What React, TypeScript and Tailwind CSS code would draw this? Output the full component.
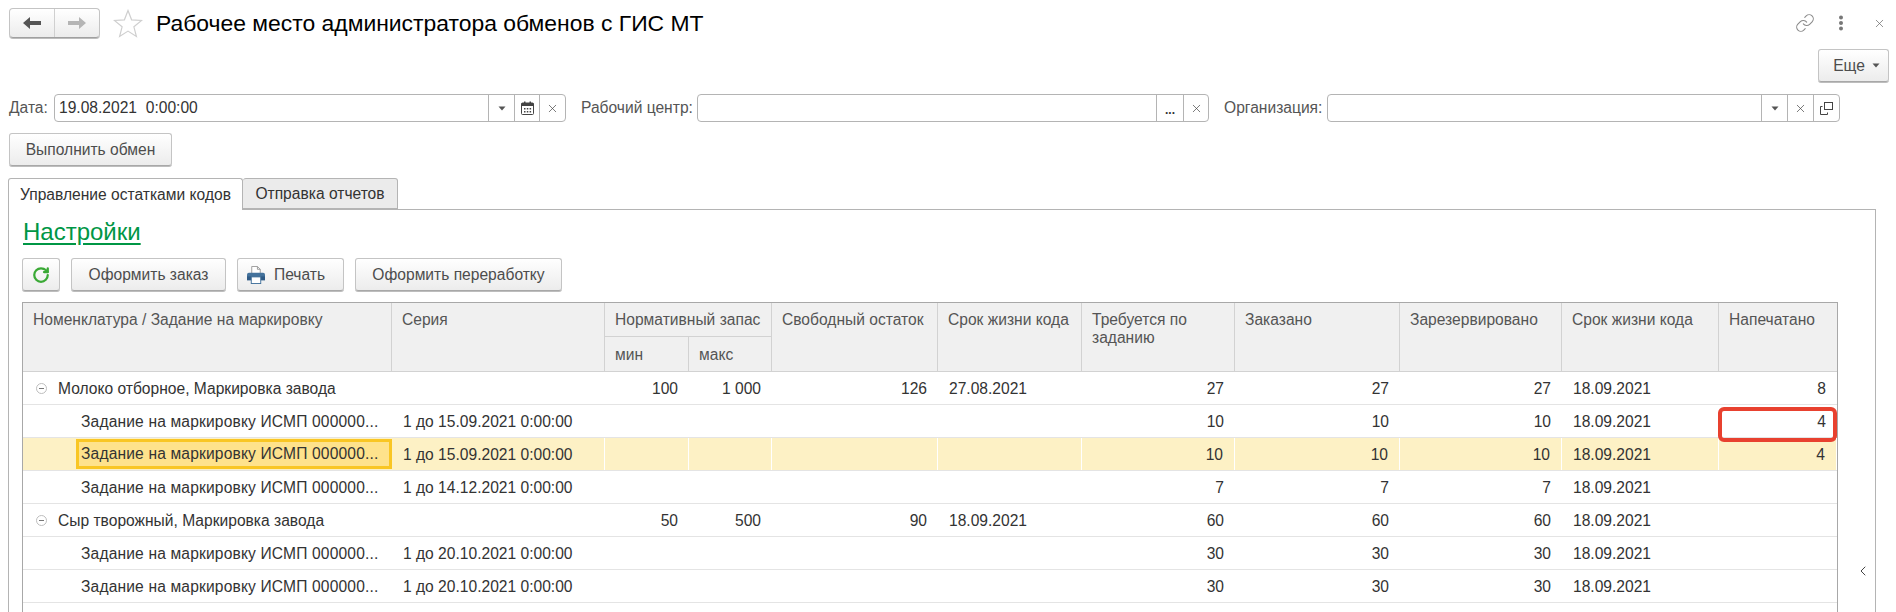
import { Link, RotateCw, X, ChevronLeft } from "lucide-react";

type Row = {
  name: string;
  group?: boolean;
  selected?: boolean;
  series?: string;
  min?: string;
  max?: string;
  free?: string;
  life?: string;
  need: string;
  ordered: string;
  reserved: string;
  life2: string;
  printed?: string;
  marked?: boolean;
};

const TASK = "Задание на маркировку ИСМП 000000...";

const rows: Row[] = [
  { name: "Молоко отборное, Маркировка завода", group: true, min: "100", max: "1 000", free: "126", life: "27.08.2021", need: "27", ordered: "27", reserved: "27", life2: "18.09.2021", printed: "8" },
  { name: TASK, series: "1 до 15.09.2021 0:00:00", need: "10", ordered: "10", reserved: "10", life2: "18.09.2021", printed: "4", marked: true },
  { name: TASK, series: "1 до 15.09.2021 0:00:00", need: "10", ordered: "10", reserved: "10", life2: "18.09.2021", printed: "4", selected: true },
  { name: TASK, series: "1 до 14.12.2021 0:00:00", need: "7", ordered: "7", reserved: "7", life2: "18.09.2021" },
  { name: "Сыр творожный, Маркировка завода", group: true, min: "50", max: "500", free: "90", life: "18.09.2021", need: "60", ordered: "60", reserved: "60", life2: "18.09.2021" },
  { name: TASK, series: "1 до 20.10.2021 0:00:00", need: "30", ordered: "30", reserved: "30", life2: "18.09.2021" },
  { name: TASK, series: "1 до 20.10.2021 0:00:00", need: "30", ordered: "30", reserved: "30", life2: "18.09.2021" },
];

const COLS = "grid grid-cols-[369px_213px_84px_83px_166px_144px_153px_165px_162px_157px_118px]";
const BTN = "flex items-center justify-center rounded-[3px] border border-[#c4c4c4] border-b-[#a8a8a8] bg-gradient-to-b from-white to-[#ececec] shadow-[0_1px_0_#bdbdbd] text-[#4d4d4d]";
const HEAD = "bg-[#f0f0f0] border-r border-b border-[#d2d2d2] px-[10px] text-[#555] leading-[18px]";

const Caret = () => (
  <svg width="8" height="5" viewBox="0 0 8 5"><path d="M0.5 0.5h7L4 4.5z" fill="#555" /></svg>
);

const FieldBtn = ({ w, children }: { w: string; children: React.ReactNode }) => (
  <div className={`${w} h-full flex items-center justify-center border-l border-[#b4b4b4] text-[#555]`}>{children}</div>
);

const Cross = () => <X size={13} strokeWidth={1.3} color="#444" />;

const Calendar = () => (
  <svg width="13" height="14" viewBox="0 0 13 14">
    <rect x="0.5" y="2" width="12" height="11.5" rx="1" fill="#fff" stroke="#444" />
    <rect x="0.5" y="2" width="12" height="3" fill="#444" />
    <rect x="3" y="0.5" width="1.5" height="3" fill="#444" />
    <rect x="8.5" y="0.5" width="1.5" height="3" fill="#444" />
    <path d="M3 7h1.5v1.5H3zM5.8 7h1.5v1.5H5.8zM8.6 7h1.5v1.5H8.6zM3 10h1.5v1.5H3zM5.8 10h1.5v1.5H5.8zM8.6 10h1.5v1.5H8.6z" fill="#444" />
  </svg>
);

const Printer = () => (
  <svg width="18" height="18" viewBox="0 0 19 19">
    <path d="M5 8V0.5h6l3 3V8z" fill="#fff" stroke="#9a9a9a" />
    <path d="M11 0.5v3h3" fill="none" stroke="#9a9a9a" />
    <path d="M2 7h15a2 2 0 0 1 2 2v6h-19V9a2 2 0 0 1 2-2z" fill="#44729c" />
    <rect x="0" y="11" width="19" height="4" fill="#2f5a85" />
    <rect x="4.5" y="11.5" width="10" height="7" fill="#fff" stroke="#44729c" />
  </svg>
);

function Toggle() {
  return (
    <svg width="11" height="11" viewBox="0 0 11 11" className="shrink-0">
      <circle cx="5.5" cy="5.5" r="5" fill="#fff" stroke="#bdbdbd" />
      <path d="M3 5.5h5" stroke="#777" />
    </svg>
  );
}

function DataRow({ row }: { row: Row }) {
  const bg = row.selected ? "bg-[#fdf1c5]" : "bg-white";
  const cell = `h-full flex items-center px-[11px] pt-px whitespace-nowrap ${row.selected ? "border-r border-white" : ""}`;
  const num = `${cell} justify-end`;
  return (
    <div className={`${COLS} ${bg} h-[33px] border-b border-[#e4e4e4] text-[#333]`}>
      {row.group ? (
        <div className="h-full flex items-center pl-[13px] pt-px gap-[11px] whitespace-nowrap">
          <Toggle />
          {row.name}
        </div>
      ) : row.selected ? (
        <div className="h-full pl-[53px] pt-px">
          <div className="h-[30px] flex items-center pl-[2px] border-[3px] border-[#f9c624] bg-[#fee28c] whitespace-nowrap tracking-[0.15px]">{row.name}</div>
        </div>
      ) : (
        <div className="h-full flex items-center pl-[58px] pt-px whitespace-nowrap tracking-[0.15px]">{row.name}</div>
      )}
      <div className={cell}>{row.series}</div>
      <div className={num}>{row.min}</div>
      <div className={num}>{row.max}</div>
      <div className={num}>{row.free}</div>
      <div className={cell}>{row.life}</div>
      <div className={num}>{row.need}</div>
      <div className={num}>{row.ordered}</div>
      <div className={num}>{row.reserved}</div>
      <div className={cell}>{row.life2}</div>
      <div className={`${num} relative`}>
        {row.printed}
        {row.marked && (
          <div className="absolute left-[-1px] right-0 top-[2px] h-[35px] rounded-[6px] border-[4px] border-[#e8412f]" />
        )}
      </div>
    </div>
  );
}

export default function App() {
  return (
    <div className="w-[1896px] h-[612px] overflow-hidden bg-white font-['Liberation_Sans',Arial,sans-serif] text-[15.6px] flex flex-col">
      {/* title bar */}
      <div className="flex items-center h-[30px] mt-2 pl-[9px] pr-[10px]">
        <div className="flex w-[91px] h-[30px] rounded-[4px] border border-[#c4c4c4] border-b-[#a0a0a0] bg-gradient-to-b from-white to-[#ececec] shadow-[0_1px_0_#bdbdbd]">
          <div className="w-[45px] flex items-center justify-center border-r border-[#d0d0d0]">
            <svg width="18" height="14" viewBox="0 0 18 14"><path d="M0 7l7-6v4h11v4H7v4z" fill="#555" /></svg>
          </div>
          <div className="flex-1 flex items-center justify-center">
            <svg width="18" height="14" viewBox="0 0 18 14"><path d="M18 7l-7-6v4H0v4h11v4z" fill="#b5b5b5" /></svg>
          </div>
        </div>
        <svg width="30" height="29" viewBox="0 0 30 29" className="ml-[13px]">
          <path d="M15 1.5l3.6 9.3 10 .6-7.7 6.4 2.5 9.7-8.4-5.4-8.4 5.4 2.5-9.7-7.7-6.4 10-.6z" fill="#fff" stroke="#cfcfcf" strokeWidth="1.2" />
        </svg>
        <h1 className="ml-[13px] text-[22.9px] leading-[30px] text-black">Рабочее место администратора обменов с ГИС МТ</h1>
        <div className="ml-auto flex items-center">
          <Link size={20} strokeWidth={1.3} color="#8a8a8a" />
          <svg width="6" height="16" viewBox="0 0 6 16" className="ml-[23px]">
            <circle cx="3" cy="2.5" r="2" fill="#777" />
            <circle cx="3" cy="8" r="2" fill="#777" />
            <circle cx="3" cy="13.5" r="2" fill="#777" />
          </svg>
          <X size={13} strokeWidth={1.3} color="#666" className="ml-[29px]" />
        </div>
      </div>

      {/* more */}
      <div className="flex justify-end mt-[11px] pr-[7px]">
        <div className={`${BTN} w-[71px] h-[33px] gap-[7px] pl-[6px]`}>
          Еще <Caret />
        </div>
      </div>

      {/* filters */}
      <div className="flex items-center h-[28px] mt-[12px] pl-[9px] text-[#555]">
        <span className="w-[45px] whitespace-nowrap">Дата:</span>
        <div className="flex w-[512px] h-full rounded-[4px] border border-[#b4b4b4] text-[#333]">
          <div className="flex-1 flex items-center pl-[4px]">19.08.2021&nbsp;&nbsp;0:00:00</div>
          <FieldBtn w="w-[26px]"><Caret /></FieldBtn>
          <FieldBtn w="w-[25px]"><Calendar /></FieldBtn>
          <FieldBtn w="w-[26px]"><Cross /></FieldBtn>
        </div>
        <span className="w-[116px] ml-[15px] whitespace-nowrap">Рабочий центр:</span>
        <div className="flex w-[512px] h-full rounded-[4px] border border-[#b4b4b4]">
          <div className="flex-1" />
          <FieldBtn w="w-[27px]"><span className="text-[#333] leading-none pt-[4px] font-bold text-[12px]">...</span></FieldBtn>
          <FieldBtn w="w-[25px]"><Cross /></FieldBtn>
        </div>
        <span className="w-[103px] ml-[15px] whitespace-nowrap">Организация:</span>
        <div className="flex w-[513px] h-full rounded-[4px] border border-[#b4b4b4]">
          <div className="flex-1" />
          <FieldBtn w="w-[26px]"><Caret /></FieldBtn>
          <FieldBtn w="w-[26px]"><Cross /></FieldBtn>
          <FieldBtn w="w-[26px]">
            <svg width="13" height="13" viewBox="0 0 13 13" fill="none" stroke="#444">
              <rect x="4.5" y="0.5" width="8" height="7" />
              <path d="M2.5 4.5h-2v8h7v-2" />
            </svg>
          </FieldBtn>
        </div>
      </div>

      <div className="flex mt-[11px] pl-[9px]">
        <div className={`${BTN} w-[163px] h-[33px]`}>Выполнить обмен</div>
      </div>

      {/* tabs */}
      <div className="flex mt-[12px] ml-2 h-[32px] text-[#333] relative z-10">
        <div className="w-[235px] h-[32px] flex items-center justify-center bg-white border border-b-0 border-[#b4b4b4] rounded-t-[3px]">Управление остатками кодов</div>
        <div className="w-[155px] h-[31px] flex items-center justify-center bg-[#ebebeb] border border-l-0 border-[#b4b4b4] rounded-t-[3px]">Отправка отчетов</div>
      </div>

      {/* panel */}
      <div className="flex flex-1 min-h-0 ml-2 w-[1868px] border border-b-0 border-[#b4b4b4] -mt-px">
        <div className="w-[1829px] pl-[13px]">
          <a className="block mt-[10px] ml-px text-[24px] leading-[24px] text-[#009645] underline underline-offset-[3px]">Настройки</a>
          <div className="flex gap-[11px] mt-[14px] h-[33px]">
            <div className={`${BTN} w-[38px]`}>
              <RotateCw size={18} strokeWidth={3} color="#3aa935" />
            </div>
            <div className={`${BTN} w-[155px]`}>Оформить заказ</div>
            <div className={`${BTN} w-[107px] !justify-start pl-[9px] gap-[9px]`}>
              <Printer />
              Печать
            </div>
            <div className={`${BTN} w-[207px]`}>Оформить переработку</div>
          </div>

          {/* table */}
          <div className="mt-[11px] w-[1816px] border-t border-x border-[#a8a8a8]">
            <div className={`${COLS} grid-rows-[34px_35px]`}>
              <div className={`${HEAD} row-span-2 pt-[8px]`}>Номенклатура / Задание на маркировку</div>
              <div className={`${HEAD} row-span-2 pt-[8px]`}>Серия</div>
              <div className={`${HEAD} col-span-2 pt-[8px] whitespace-nowrap`}>Нормативный запас</div>
              <div className={`${HEAD} row-span-2 pt-[8px] whitespace-nowrap`}>Свободный остаток</div>
              <div className={`${HEAD} row-span-2 pt-[8px] whitespace-nowrap`}>Срок жизни кода</div>
              <div className={`${HEAD} row-span-2 pt-[8px]`}>Требуется по заданию</div>
              <div className={`${HEAD} row-span-2 pt-[8px]`}>Заказано</div>
              <div className={`${HEAD} row-span-2 pt-[8px]`}>Зарезервировано</div>
              <div className={`${HEAD} row-span-2 pt-[8px] whitespace-nowrap`}>Срок жизни кода</div>
              <div className={`${HEAD} row-span-2 pt-[8px] border-r-0`}>Напечатано</div>
              <div className={`${HEAD} pt-[9px]`}>мин</div>
              <div className={`${HEAD} pt-[9px]`}>макс</div>
            </div>
            {rows.map((row, i) => (
              <DataRow row={row} key={i} />
            ))}
            <div className="h-[33px]" />
          </div>
        </div>
        <div className="flex-1 flex justify-center pt-[353px]">
          <ChevronLeft size={16} strokeWidth={1.5} color="#444" className="ml-[12px]" />
        </div>
      </div>
    </div>
  );
}
